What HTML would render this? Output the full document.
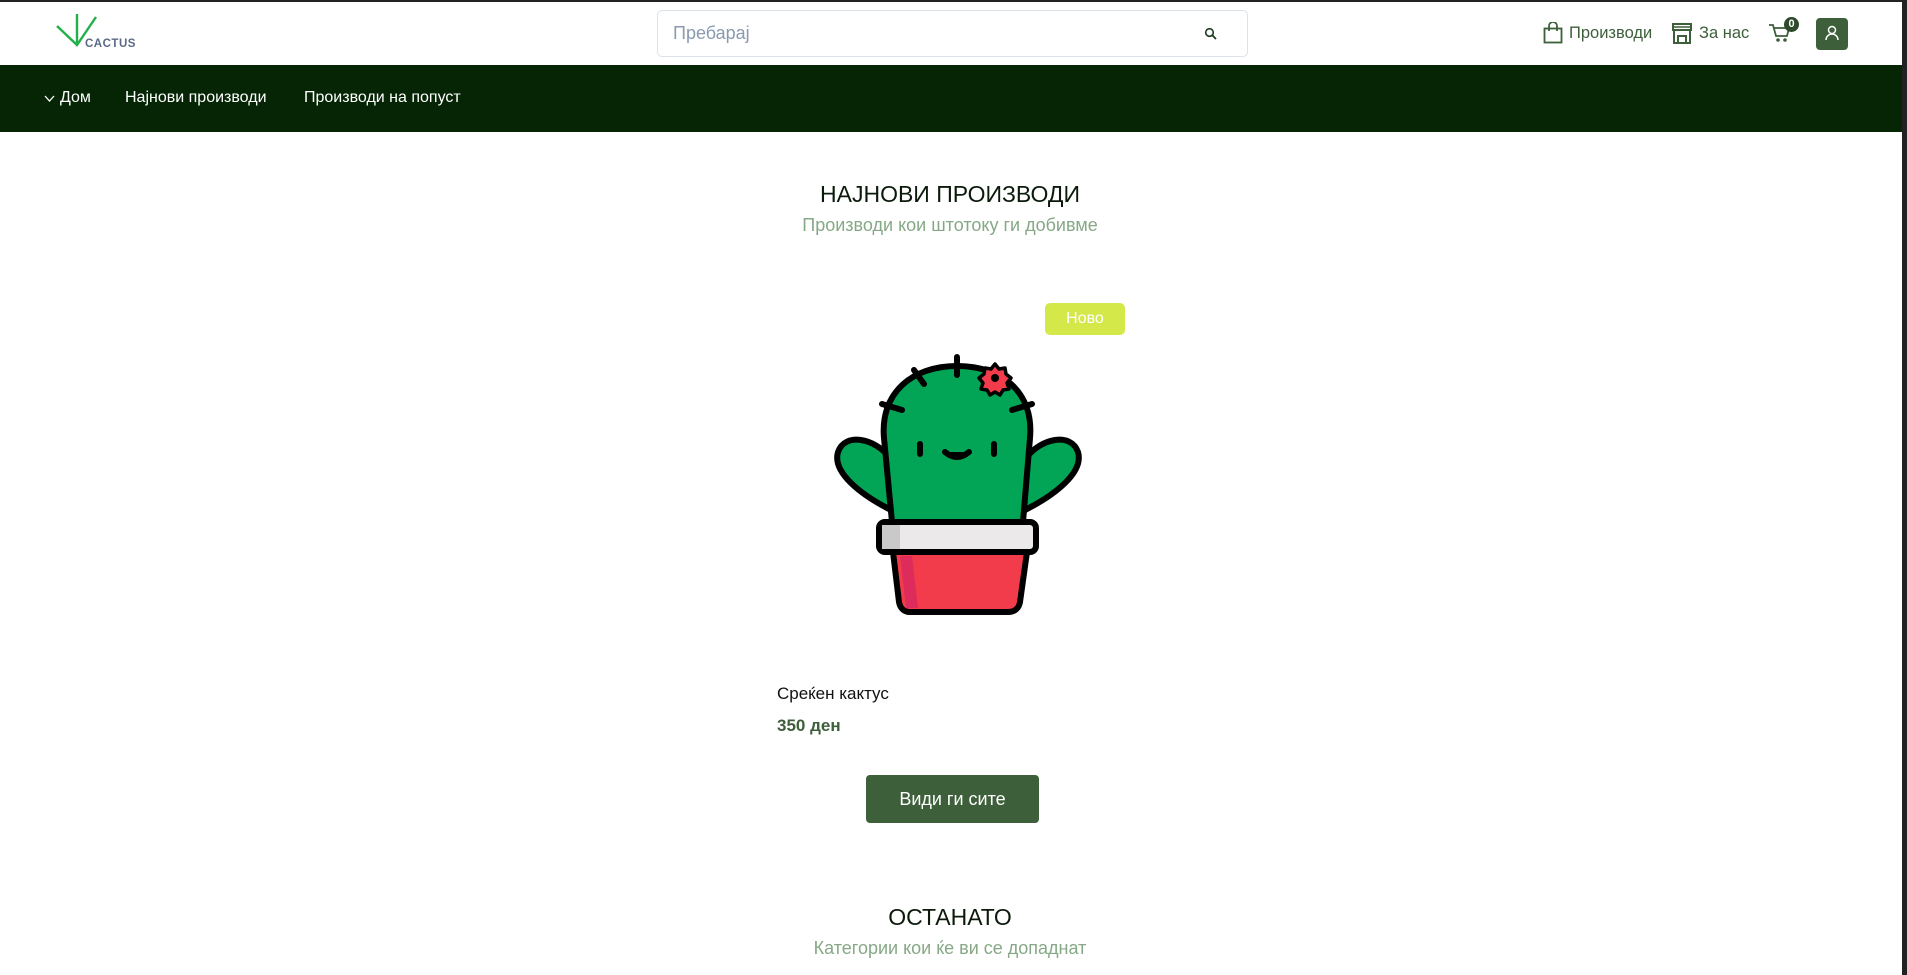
<!DOCTYPE html>
<html><head><meta charset="utf-8"><style>
*{margin:0;padding:0;box-sizing:border-box}
body{width:1907px;height:975px;overflow:hidden;background:#fff;font-family:"Liberation Sans","DejaVu Sans",sans-serif;position:relative}
.a{position:absolute;white-space:nowrap}
.c{position:absolute;left:0;width:1900px;text-align:center}
</style></head><body>
<div class="a" style="left:0;top:0;width:1907px;height:2px;background:#222"></div>
<div class="a" style="right:0;top:0;width:5px;height:975px;background:#222"></div>
<!-- logo -->
<svg class="a" style="left:55px;top:12px" width="90" height="40" viewBox="0 0 90 40">
<path d="M2 14 L22 33 L41 5 M22 33 L22 2" stroke="#22b04a" stroke-width="2.4" fill="none"/>
<text x="30" y="35" font-family="Liberation Sans" font-weight="bold" font-size="11.5" letter-spacing="0.5" fill="#5a6a86">CACTUS</text>
</svg>
<!-- search -->
<div class="a" style="left:657px;top:10px;width:591px;height:47px;border:1px solid #dbe2ea;border-radius:5px"></div>
<div class="a" style="left:673px;top:23px;font-size:18px;color:#8a9ab0">Пребарај</div>
<svg class="a" style="left:1204px;top:27px" width="14" height="14" viewBox="0 0 14 14"><circle cx="5.5" cy="5.5" r="3.8" stroke="#1f3a1f" stroke-width="1.6" fill="none"/><path d="M8.3 8.3L12 12" stroke="#1f3a1f" stroke-width="1.8"/></svg>
<!-- right icons -->
<svg class="a" style="left:1543px;top:22px" width="20" height="22" viewBox="0 0 20 22"><rect x="1.5" y="6.5" width="17" height="14" fill="none" stroke="#3d5f3a" stroke-width="1.8"/><path d="M6 9V4a4 4 0 0 1 8 0v5" fill="none" stroke="#3d5f3a" stroke-width="1.8"/></svg>
<div class="a" style="left:1569px;top:24px;font-size:16.5px;color:#3d5f3a">Производи</div>
<svg class="a" style="left:1671px;top:22px" width="22" height="22" viewBox="0 0 22 22"><path d="M2 2h18v6H2z M3 8v13h16V8 M7 21v-7h8v7" fill="none" stroke="#3d5f3a" stroke-width="2"/><path d="M2 5h18" stroke="#3d5f3a" stroke-width="1.5"/></svg>
<div class="a" style="left:1699px;top:24px;font-size:16.5px;color:#3d5f3a">За нас</div>
<svg class="a" style="left:1768px;top:22px" width="24" height="22" viewBox="0 0 24 22"><path d="M1 3h4l3 11h11l2-8H6" fill="none" stroke="#3d5f3a" stroke-width="1.8"/><circle cx="10" cy="18" r="1.8" fill="#3d5f3a"/><circle cx="17" cy="18" r="1.8" fill="#3d5f3a"/></svg>
<div class="a" style="left:1784px;top:17px;width:15px;height:15px;border-radius:50%;background:#2d4a2b;color:#fff;font-size:11px;font-weight:bold;text-align:center;line-height:15px">0</div>
<div class="a" style="left:1816px;top:18px;width:32px;height:32px;border-radius:4px;background:#3d5f3a"></div>
<svg class="a" style="left:1824px;top:24px" width="16" height="18" viewBox="0 0 16 18"><circle cx="8" cy="6" r="3.5" fill="none" stroke="#fff" stroke-width="1.5"/><path d="M2 16a6 6 0 0 1 12 0" fill="none" stroke="#fff" stroke-width="1.5"/></svg>
<!-- nav -->
<div class="a" style="left:0;top:65px;width:1902px;height:67px;background:#052505"></div>
<svg class="a" style="left:44px;top:95px" width="11" height="8" viewBox="0 0 11 8"><path d="M1 1l4.5 5L10 1" stroke="#fff" stroke-width="1.3" fill="none"/></svg>
<div class="a" style="left:60px;top:89px;font-size:16px;color:#fff">Дом</div>
<div class="a" style="left:125px;top:89px;font-size:16px;color:#fff">Најнови производи</div>
<div class="a" style="left:304px;top:89px;font-size:16px;color:#fff">Производи на попуст</div>
<!-- headings -->
<div class="c" style="top:181px;font-size:23px;color:#0c1a0c">НАЈНОВИ ПРОИЗВОДИ</div>
<div class="c" style="top:215px;font-size:18px;color:#86a886">Производи кои штотоку ги добивме</div>
<div class="a" style="left:1045px;top:303px;width:80px;height:32px;border-radius:5px;background:#d4e84a;color:#fff;font-size:16px;text-align:center;line-height:32px">Ново</div>
<!-- cactus -->
<svg class="a" style="left:820px;top:290px" width="320" height="340" viewBox="0 0 320 340">
<g stroke="#000" stroke-width="6" stroke-linecap="round" stroke-linejoin="round">
<path d="M70 168 C55 148 25 142 18 162 C12 182 40 205 75 222 Z" fill="#02a555"/>
<path d="M206 168 C221 148 251 142 258 162 C264 182 236 205 201 222 Z" fill="#02a555"/>
<path d="M72 232 L64 148 C60 103 92 76 137 76 C183 76 214 103 210 148 L203 232 Z" fill="#02a555"/>
<path d="M73 262 L207 262 L200 312 C199 318 195 322 188 322 L90 322 C84 322 80 318 79 312 Z" fill="#f23c4b"/>
<path d="M80 266 L92 266 L98 318 L86 318 Z" fill="#dd2c5c" stroke="none"/>
<rect x="59" y="232" width="157" height="30" rx="6" fill="#ebe9ea"/>
<rect x="62" y="235" width="18" height="24" fill="#c9c9c9" stroke="none"/>
<path d="M137 67v18 M94 80l10 14 M62 114l20 6 M192 120l20 -6"/>
<path d="M100 154v10 M174 154v10"/>
<path d="M125 162q12 10 24 0"/>
</g>
<path d="M175 74 l4 5 6 -1 1 6 5 4 -4 5 2 6 -6 1 -3 5 -5 -3 -5 3 -3 -5 -6 -1 2 -6 -4 -5 5 -4 1 -6 6 1z" fill="#f23c4b" stroke="#000" stroke-width="3.5" stroke-linejoin="round"/>
<circle cx="175" cy="88" r="4" fill="#000"/>
</svg>
<!-- product -->
<div class="a" style="left:777px;top:684px;font-size:17px;color:#111">Среќен кактус</div>
<div class="a" style="left:777px;top:716px;font-size:17px;font-weight:bold;color:#3d5f3a">350 ден</div>
<div class="a" style="left:866px;top:775px;width:173px;height:48px;border-radius:4px;background:#3d5f3a;color:#fff;font-size:18px;text-align:center;line-height:48px">Види ги сите</div>
<div class="c" style="top:904px;font-size:23px;color:#0c1a0c">ОСТАНАТО</div>
<div class="c" style="top:938px;font-size:18px;color:#86a886">Категории кои ќе ви се допаднат</div>
</body></html>
